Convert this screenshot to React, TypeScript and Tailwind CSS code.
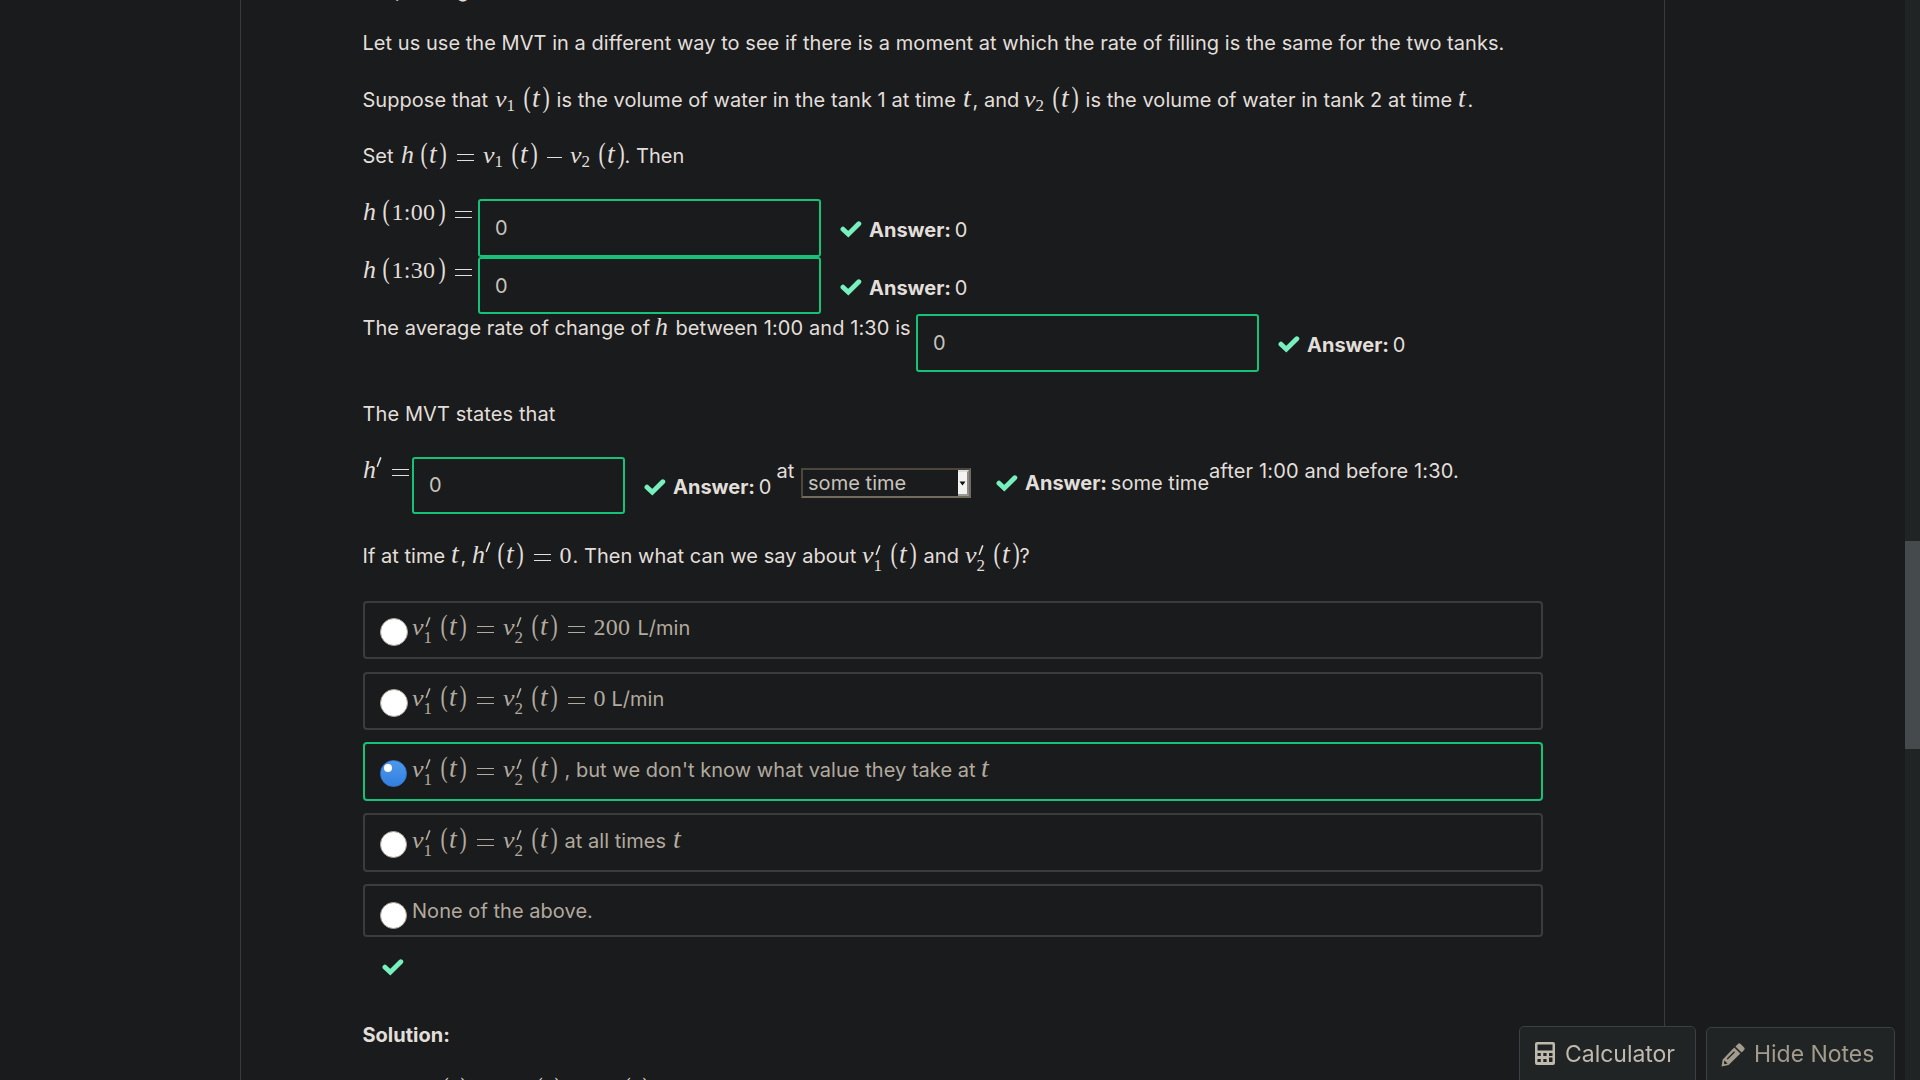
import React from "react";

type Box = { children?: React.ReactNode; className?: string };

const T = ({ children, className = "" }: Box) => (
  <span className={`shrink-0 whitespace-pre ${className}`}>{children}</span>
);

const Sym = ({ children, className = "" }: Box) => (
  <span
    className={`inline-block shrink-0 whitespace-pre font-['Liberation_Serif',serif] text-[24px] leading-none ${className}`}
  >
    {children}
  </span>
);

const It = ({ children, className = "" }: Box) => <Sym className={`italic ${className}`}>{children}</Sym>;

const LP = () => <Sym className="-ml-px w-[9px] origin-[50%_84%] scale-x-[0.9] scale-y-[1.2]">(</Sym>;
const RP = () => <Sym className="w-[8px] origin-[50%_84%] scale-x-[0.9] scale-y-[1.2]">)</Sym>;

const TVar = ({ className = "w-[10px]" }: Box) => (
  <It className={className}>
    <span className="inline-block origin-[0%_84%] scale-x-[1.16] scale-y-[1.12]">t</span>
  </It>
);

const HVar = ({ className = "w-[20px]", prime = false }: Box & { prime?: boolean }) => (
  <It className={`relative ${className}`}>
    <span className="inline-block origin-[0%_84%] scale-x-[1.08] scale-y-[1.04]">h</span>
    {prime && <Prime className="absolute -top-px left-[13px]" />}
  </It>
);

const OfT = () => (
  <span className="inline-flex w-[26px] shrink-0 items-baseline leading-none">
    <LP />
    <TVar />
    <RP />
  </span>
);

const V = ({ n, prime = false }: { n: string; prime?: boolean }) => (
  <span className="inline-flex w-[55px] shrink-0 items-baseline leading-none">
    <It className="w-[12px]">
      <span className="inline-block origin-[0%_84%] scale-x-[1.08]">v</span>
    </It>
    <span className="relative inline-block w-[17px] font-['Liberation_Serif',serif] text-[17px] leading-none">
      <span className={`relative inline-block ${prime ? "top-[8px]" : "top-[4px]"}`}>{n}</span>
      {prime && <Prime className="absolute -top-[4px] left-[1px]" />}
    </span>
    <OfT />
  </span>
);

const Prime = ({ className = "" }: Box) => (
  <svg className={className} width="6" height="10" viewBox="0 0 6 10">
    <path d="M4.6 0.9 L1.4 9.2" stroke="currentColor" strokeWidth="1.6" strokeLinecap="round" />
  </svg>
);

const Eq = ({ className = "mr-[9px] ml-[10px]" }: Box) => (
  <span
    className={`inline-block h-[7px] w-[17px] shrink-0 -translate-y-[2px] self-baseline border-y border-current ${className}`}
  />
);

const Check = ({ className = "" }: Box) => (
  <svg className={`shrink-0 text-[#78f0bd] ${className}`} width="22" height="17" viewBox="0 0 22 17">
    <path d="M3 8.2 L8.3 13.2 L18.8 2.8" fill="none" stroke="currentColor" strokeWidth="4.9" strokeLinejoin="miter" strokeLinecap="round" />
  </svg>
);

const Line = ({ children, className = "" }: Box) => (
  <div
    className={`flex h-[30px] items-baseline leading-[30px] before:invisible before:-ml-[0.5px] before:w-0 before:content-['x'] ${className}`}
  >
    {children}
  </div>
);

const Field = ({ className = "pb-[1px]" }: Box) => (
  <div
    className={`flex h-full shrink-0 items-center rounded-[3px] border-2 border-[#16c277] pl-[15px] text-[#c8c3bc] ${className}`}
  >
    0
  </div>
);

const Answer = ({ text = "0", className = "" }: Box & { text?: string }) => (
  <div className={`flex shrink-0 items-center leading-[30px] whitespace-pre ${className}`}>
    <Check className="mr-[7px]" />
    <b className="font-bold tracking-normal">Answer: </b>
    <span className="-ml-px">{text}</span>
  </div>
);

const Option = ({
  children,
  className = "",
  on = false,
  radio = "mt-[15px] mr-[4px] size-[28px]",
  line = "mt-[10px]",
}: Box & { on?: boolean; radio?: string; line?: string }) => (
  <div
    className={`flex shrink-0 rounded-[4px] border-2 pl-[15px] ${on ? "border-[#16c277]" : "border-[#3a3c3e]"} ${className}`}
  >
    {on ? (
      <span className="relative mt-[16px] mr-[5px] size-[27px] shrink-0 rounded-full border border-[#3478d0] bg-linear-to-b from-[#4f98ea] to-[#327fe2]">
        <span className="absolute top-[3px] left-[3px] size-[8px] rounded-full bg-white" />
      </span>
    ) : (
      <span className={`shrink-0 rounded-full border border-[#a8a095] bg-white ${radio}`} />
    )}
    <Line className={`${line} text-[#b2aa9e]`}>{children}</Line>
  </div>
);

export default function App() {
  return (
    <div className="flex h-[1080px] w-[1920px] overflow-hidden bg-[#1a1b1d] font-[Inter,sans-serif] text-[20px] tracking-[0.04px] text-[#e2dfda]">
      <div className="w-[240px] shrink-0" />
      <main className="flex w-[1425px] shrink-0 flex-col border-x border-[#393b3d] pl-[122px]">
        <Line className="-mt-[25px]">
          <T className="pl-[10px]">explaining</T>
        </Line>
        <Line className="mt-[23px]">
          <T>Let us use the MVT in a different way to see if there is a moment at which the rate of filling is the same for the two tanks.</T>
        </Line>
        <Line className="mt-[27px]">
          <T className="w-[132px]">Suppose that</T>
          <V n="1" />
          <T className="ml-[7px] w-[406px] tracking-[0.06px]">is the volume of water in the tank 1 at time</T>
          <TVar className="w-[10px]" />
          <T className="w-[51px]">, and</T>
          <V n="2" />
          <T className="ml-[7px] w-[372px]">is the volume of water in tank 2 at time</T>
          <TVar className="w-[10px]" />
          <T>.</T>
        </Line>
        <Line className="mt-[26px]">
          <T className="w-[38px]">Set</T>
          <HVar />
          <OfT />
          <Eq />
          <V n="1" />
          <span className="mr-[8px] ml-[9px] inline-block h-px w-[15px] -translate-y-[5px] self-baseline bg-current" />
          <V n="2" />
          <T>. Then</T>
        </Line>

        {["00", "30"].map((m, i) => (
          <div key={m} className={i === 0 ? "mt-[28px] flex h-[58px] shrink-0" : "flex h-[57px] shrink-0"}>
            <Line className="-mt-px w-[115px] shrink-0">
              <HVar />
              <LP />
              <Sym className="w-[47px] pl-[1px] tracking-[0.3px]">1:{m}</Sym>
              <RP />
              <Eq className="ml-[9px]" />
            </Line>
            <Field className={i === 0 ? "w-[343px] pb-[1px]" : "w-[343px]"} />
            <Answer className={i === 0 ? "mt-[3px] ml-[19px]" : "mt-[4px] ml-[19px]"} />
          </div>
        ))}
        <div className="flex h-[58px] shrink-0">
          <Line className="-mt-px w-[553px] shrink-0">
            <T className="w-[292px]">The average rate of change of</T>
            <HVar className="w-[21px]" />
            <T className="tracking-[0.09px]">between 1:00 and 1:30 is</T>
          </Line>
          <Field className="w-[343px] pb-[1px]" />
          <Answer className="mt-[3px] ml-[19px]" />
        </div>

        <Line className="mt-[27px]">
          <T className="tracking-[0.09px]">The MVT states that</T>
        </Line>

        <div className="mt-[28px] flex h-[57px] shrink-0">
          <Line className="-mt-px w-[49px] shrink-0">
            <HVar className="w-[29px]" prime />
            <Eq className="" />
          </Line>
          <Field className="w-[213px] pb-[1px]" />
          <Answer className="mt-[3px] ml-[19px] w-[133px]" />
          <Line className="-mt-px w-[24px] shrink-0">
            <T>at</T>
          </Line>
          <div className="mt-[11px] flex h-[30px] w-[170px] shrink-0 items-center justify-between border-2 border-t-[#4c463c] border-r-[#736b5e] border-b-[#736b5e] border-l-[#4c463c] pl-[5px] text-[#c8c3bc]">
            <span>some time</span>
            <span className="flex h-[26px] w-[11px] items-center justify-center border-t-2 border-r-2 border-b-2 border-t-[#dedede] border-r-[#8b8b8b] border-b-[#9a9a9a] bg-[#f4f3f2]">
              <svg width="7" height="5" viewBox="0 0 7 5">
                <path d="M0.5 0.5 H6.5 L3.5 4.5 Z" fill="#111" />
              </svg>
            </span>
          </div>
          <Answer text="some time" className="-mt-[5px] ml-[25px] w-[213px]" />
          <Line className="-mt-px">
            <T className="ml-[0.5px] tracking-[0.14px]">after 1:00 and before 1:30.</T>
          </Line>
        </div>

        <Line className="mt-[27px]">
          <T className="w-[88px]">If at time</T>
          <TVar className="w-[10px]" />
          <T className="w-[11px]">,</T>
          <HVar className="w-[26px]" prime />
          <OfT />
          <Eq />
          <Sym className="w-[13px]">0</Sym>
          <T className="w-[289px]">. Then what can we say about</T>
          <V n="1" prime />
          <T className="ml-[7px] w-[41px]">and</T>
          <V n="2" prime />
          <T>?</T>
        </Line>

        <div className="mt-[30px] flex w-[1180px] shrink-0 flex-col">
          <Option className="h-[58px]">
            <V n="1" prime />
            <Eq />
            <V n="2" prime />
            <Eq />
            <Sym className="w-[44px] tracking-[0.3px]">200</Sym>
            <T className="tracking-normal">L/min</T>
          </Option>
          <Option className="mt-[13px] h-[58px]">
            <V n="1" prime />
            <Eq />
            <V n="2" prime />
            <Eq />
            <Sym className="w-[18px]">0</Sym>
            <T className="tracking-normal">L/min</T>
          </Option>
          <Option className="mt-[12px] h-[59px]" on line="mt-[11px]">
            <V n="1" prime />
            <Eq />
            <V n="2" prime />
            <T className="ml-[7px] w-[416px]">, but we don't know what value they take at</T>
            <TVar />
          </Option>
          <Option className="mt-[12px] h-[59px]" radio="mt-[16px] mr-[5px] size-[27px]" line="mt-[11px]">
            <V n="1" prime />
            <Eq />
            <V n="2" prime />
            <T className="ml-[7px] w-[108px]">at all times</T>
            <TVar />
          </Option>
          <Option className="mt-[12px] h-[53px]" radio="mt-[16px] mr-[5px] size-[27px]" line="mt-[10px]">
            <T className="ml-[0.5px]">None of the above.</T>
          </Option>
        </div>
        <Check className="mt-[22px] ml-[19px]" />
        <Line className="mt-[44px]">
          <b className="tracking-normal">Solution:</b>
        </Line>
        <Line className="mt-[26px] pl-[59px]">
          <HVar />
          <OfT />
          <Eq className="mr-[12px] ml-[10px]" />
          <V n="1" />
          <span className="mr-[9px] ml-[9px] inline-block h-px w-[15px] -translate-y-[5px] self-baseline bg-current" />
          <V n="2" />
        </Line>
      </main>
      <div className="flex-1" />
      <aside className="flex w-[15px] shrink-0 flex-col bg-[#202425] pt-[541px]">
        <div className="h-[208px] bg-[#454a4c]" />
      </aside>

      <div className="fixed top-[1026px] left-[1519px] flex items-start gap-[10px] text-[23px] tracking-[-0.03px]">
        <button className="flex h-[60px] w-[177px] items-start rounded-t-[5px] border border-[#3c4042] bg-[#202425] pt-[15px] pl-[15px] text-[#c0b9ae]">
          <svg className="mr-[10px]" width="20" height="23" viewBox="0 0 20 23">
            <path
              fillRule="evenodd"
              fill="currentColor"
              d="M2 0H18Q20 0 20 2V21Q20 23 18 23H2Q0 23 0 21V2Q0 0 2 0ZM2.5 2.5V8.5H17.5V2.5ZM2.5 11V14H5.8V11ZM8.3 11V14H11.6V11ZM14 11V14H17.5V11ZM2.5 17V20H5.8V17ZM8.3 17V20H11.6V17ZM14 15.5V20H17.5V15.5Z"
            />
          </svg>
          <span className="-mt-[6px] leading-[36px]">Calculator</span>
        </button>
        <button className="mt-px flex h-[60px] w-[189px] items-start rounded-t-[5px] border border-[#3c4042] bg-[#202425] pt-[15px] pl-[14px] text-[#a39b8c]">
          <svg className="mr-[9px]" width="24" height="24" viewBox="0 0 24 24">
            <path
              fillRule="evenodd"
              fill="currentColor"
              d="M0.5 23.5 L1.7 16.4 L13.2 4.6 L19.4 10.6 L7.6 22.1 Z M3.4 17.6 L2.9 20.2 L3.9 21.2 L6.6 20.5 Z M5.8 15.6 L6.7 16.5 L14 9.2 L13.1 8.3 Z"
            />
            <path fill="currentColor" d="M14.4 3.5 L17 0.9 Q18.3 -0.2 19.6 0.9 L23.1 4.4 Q24.2 5.7 23.1 7 L20.6 9.5 Z" />
          </svg>
          <span className="-mt-[7px] leading-[36px]">Hide Notes</span>
        </button>
      </div>
    </div>
  );
}
